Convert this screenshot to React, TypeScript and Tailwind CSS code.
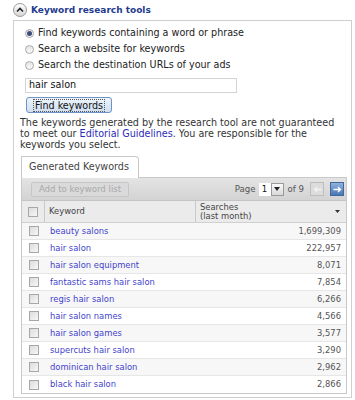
import React from 'react';

const rows: [string, string][] = [
  ['beauty salons', '1,699,309'],
  ['hair salon', '222,957'],
  ['hair salon equipment', '8,071'],
  ['fantastic sams hair salon', '7,854'],
  ['regis hair salon', '6,266'],
  ['hair salon names', '4,566'],
  ['hair salon games', '3,577'],
  ['supercuts hair salon', '3,290'],
  ['dominican hair salon', '2,962'],
  ['black hair salon', '2,866'],
];

const Radio = ({ checked }: { checked?: boolean }) => (
  <span className="w-[9px] h-[9px] rounded-full border border-[#a9a9a9] bg-gradient-to-b from-[#e4e4e4] to-[#fafafa] flex items-center justify-center shrink-0">
    {checked && <span className="w-[5px] h-[5px] rounded-full bg-[#3b4f7a]" />}
  </span>
);

const Check = () => (
  <span className="block w-[10px] h-[10px] border border-[#a7a7a7] bg-gradient-to-br from-[#dcdcdc] to-[#f7f7f7]" />
);

const App: React.FC = () => {
  return (
    <div className="w-[355px] h-[400px] bg-white overflow-hidden font-['DejaVu_Sans',sans-serif] text-[#333]">
      {/* section header */}
      <div className="h-[20px] flex items-center pl-[13px]">
        <span className="w-[14px] h-[14px] rounded-full border border-[#9a9a9a] bg-gradient-to-b from-white to-[#d6d6d6] flex items-center justify-center">
          <svg width="8" height="6" viewBox="0 0 8 6">
            <path d="M1 4.5 L4 1.5 L7 4.5" fill="none" stroke="#222" strokeWidth="1.6" />
          </svg>
        </span>
        <span className="ml-[4px] text-[9px] font-bold text-[#1f3c8f] leading-none">Keyword research tools</span>
      </div>

      <div className="ml-[13px] w-[339px] h-[378px] border border-[#cfcfcf] pl-[6px] pt-[4px]">
        <div className="pl-[5px] flex flex-col text-[9.6px] text-[#222]">
          {['Find keywords containing a word or phrase', 'Search a website for keywords', 'Search the destination URLs of your ads'].map((t, i) => (
            <label key={t} className="h-[16px] flex items-center gap-[4px]">
              <Radio checked={i === 0} />
              <span>{t}</span>
            </label>
          ))}
          <div className="mt-[5px] w-[212px] h-[15px] border border-[#d4d4d4] flex items-center pl-[3px] text-[9.6px] text-[#111]">
            hair salon
          </div>
          <button className="mt-[4px] ml-[1px] w-[86px] h-[16px] rounded-[3px] border border-[#6f93c6] bg-gradient-to-b from-[#eef4fb] to-[#cfdff1] flex items-center justify-center p-[1px]">
            <span className="border border-dotted border-[#555] px-[1px] leading-[11px] text-[9.6px] text-[#111]">Find keywords</span>
          </button>
        </div>

        <div className="mt-[4px] w-[316px] text-[9.6px] leading-[11px] text-[#333]">
          <div>The keywords generated by the research tool are not guaranteed</div>
          <div>
            to meet our <span className="text-[#2b2bb8]">Editorial Guidelines</span>. You are responsible for the
          </div>
          <div>keywords you select.</div>
        </div>

        <div className="mt-[6px] ml-[1px] w-[118px] h-[22px] border border-b-0 border-[#c9c9c9] rounded-tr-[4px] flex items-center pl-[7px] text-[9.6px] text-[#444] bg-white relative z-10 -mb-[1px]">
          Generated Keywords
        </div>

        <div className="ml-[1px] w-[326px] border border-[#c9c9c9] text-[8.4px]">
          <div className="h-[23px] bg-gradient-to-b from-[#e4e4e4] to-[#d3d3d3] flex items-center pl-[9px] pr-[2px] border-b border-[#c4c4c4]">
            <span className="w-[98px] h-[15px] border border-[#c6c6c6] bg-[#dadada] rounded-[2px] flex items-center justify-center text-[#a9a9a9] text-[8.6px]">
              Add to keyword list
            </span>
            <div className="ml-auto flex items-center text-[#555] text-[8.6px]">
              <span>Page</span>
              <span className="ml-[3px] w-[12px] h-[13px] bg-white flex items-center justify-center text-[#111]">1</span>
              <span className="w-[13px] h-[13px] border border-[#999] bg-gradient-to-b from-[#fafafa] to-[#d8d8d8] flex items-center justify-center">
                <svg width="6" height="4" viewBox="0 0 6 4"><path d="M0 0 H6 L3 4 Z" fill="#222" /></svg>
              </span>
              <span className="ml-[4px]">of 9</span>
              <span className="ml-[6px] w-[14px] h-[14px] border border-[#bdbdbd] bg-[#dcdcdc] flex items-center justify-center">
                <svg width="9" height="7" viewBox="0 0 9 7"><path d="M8.5 3.5 H1.5 M4 1 L1.5 3.5 L4 6" fill="none" stroke="#f2f2f2" strokeWidth="1.3" /></svg>
              </span>
              <span className="ml-[6px] w-[14px] h-[14px] border border-[#41679f] bg-gradient-to-b from-[#8fb2de] to-[#4a78b5] flex items-center justify-center">
                <svg width="9" height="7" viewBox="0 0 9 7"><path d="M0.5 3.5 H7.5 M5 1 L7.5 3.5 L5 6" fill="none" stroke="#fff" strokeWidth="1.4" /></svg>
              </span>
            </div>
          </div>

          <div className="h-[22px] flex bg-[#ebebeb] border-b border-[#d0d0d0] text-[#444]">
            <div className="w-[23px] border-r border-[#c9c9c9] flex items-center justify-center">
              <Check />
            </div>
            <div className="w-[151px] border-r border-[#c9c9c9] flex items-center pl-[4px]">Keyword</div>
            <div className="flex-1 flex items-center pl-[4px] pr-[6px] leading-[9px]">
              <span>
                Searches
                <br />
                (last month)
              </span>
              <svg className="ml-auto" width="5" height="3" viewBox="0 0 5 3"><path d="M0 0 H5 L2.5 3 Z" fill="#333" /></svg>
            </div>
          </div>

          {rows.map(([k, n], i) => (
            <div key={k} className={`h-[17px] flex items-center border-b border-[#e6e6e6] last:border-b-0 ${i % 2 === 0 ? 'bg-[#f7f7f7]' : 'bg-white'}`}>
              <div className="w-[23px] flex justify-center">
                <Check />
              </div>
              <span className="pl-[5px] text-[#3f3fcc]">{k}</span>
              <span className="ml-auto pr-[5px] text-[#555]">{n}</span>
            </div>
          ))}
        </div>
      </div>
    </div>
  );
};

export default App;
